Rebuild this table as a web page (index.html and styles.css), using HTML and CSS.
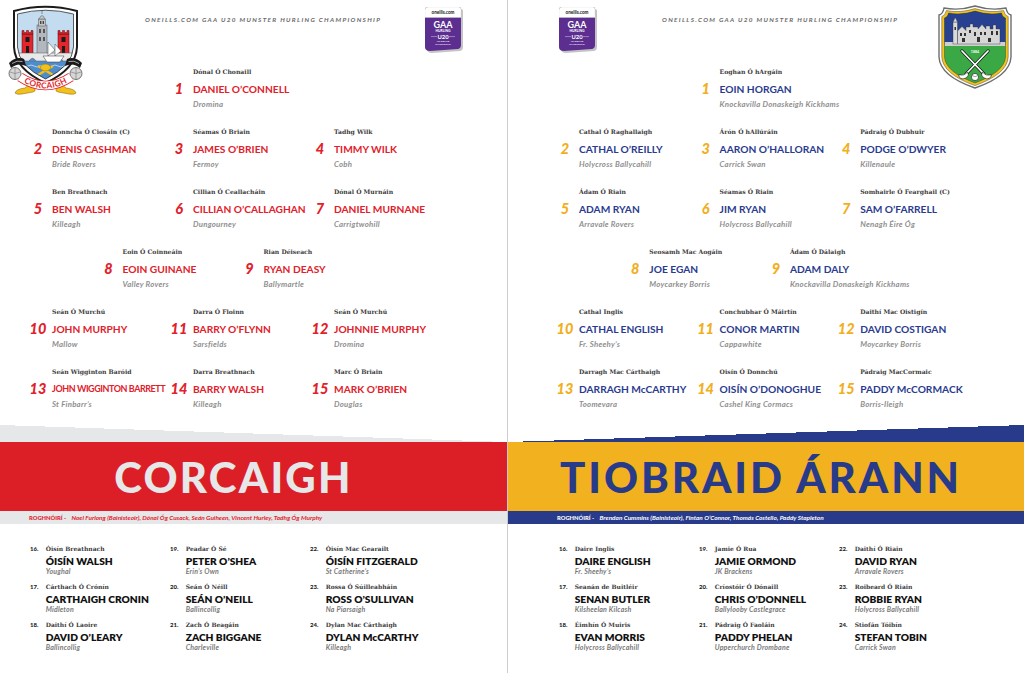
FILE: index.html
```html
<!DOCTYPE html>
<html lang="ga">
<head>
<meta charset="utf-8">
<title>Corcaigh v Tiobraid Árann – U20 Munster Hurling</title>
<link rel="stylesheet" href="styles.css">
</head>
<body>
<div class="spread">

  <section class="page page-cork">
    <header class="page-head">
      <svg class="crest crest-cork" viewBox="0 0 75 90" role="img" aria-label="Cork GAA crest">
        <defs>
          <clipPath id="corkIn"><path d="M9.5 9 Q37.5 1.5 65.5 9 L65.5 42 Q64.5 61 37.5 74 Q10.5 61 9.5 42 Z"/></clipPath>
          <path id="corkArc" d="M12 72 Q37.5 89 63 72"/>
        </defs>
        <path d="M33 70 L17 83 Q8 84 7 88 Q9 90 14 89 L25 87 Q28 86 27 84 L37 74 Z" fill="#f2c11c" stroke="#7a5d00" stroke-width=".5"/>
        <path d="M42 70 L58 83 Q67 84 68 88 Q66 90 61 89 L50 87 Q47 86 48 84 L38 74 Z" fill="#f2c11c" stroke="#7a5d00" stroke-width=".5"/>
        <path d="M6 6 Q37.5 -2.5 69 6 L69 42 Q68 64 37.5 78 Q7 64 6 42 Z" fill="#fff" stroke="#1b1b1b" stroke-width="2"/>
        <g clip-path="url(#corkIn)">
          <rect x="0" y="0" width="75" height="80" fill="#c4dcf0"/>
          <rect x="0" y="55" width="75" height="25" fill="#4f8ccc"/>
          <path d="M8 61 q3 -2 6 0 t6 0 t6 0 t6 0 t6 0 t6 0 t6 0 t6 0 t6 0 t6 0" fill="none" stroke="#fff" stroke-width=".6"/>
          <rect x="29" y="20" width="10" height="30" fill="#b3b8be" stroke="#555" stroke-width=".5"/>
          <rect x="30.5" y="14" width="7" height="7" fill="#c2c6cb" stroke="#555" stroke-width=".5"/>
          <path d="M31 14 Q34 7 37 14 Z" fill="#c2c6cb" stroke="#555" stroke-width=".5"/>
          <line x1="34" y1="5.5" x2="34" y2="9" stroke="#555" stroke-width=".6"/>
          <rect x="32" y="16" width="1.4" height="3" fill="#444"/>
          <rect x="34.6" y="16" width="1.4" height="3" fill="#444"/>
          <rect x="31" y="24" width="2" height="4" fill="#555"/>
          <rect x="35" y="24" width="2" height="4" fill="#555"/>
          <rect x="31" y="32" width="2" height="4" fill="#555"/>
          <rect x="35" y="32" width="2" height="4" fill="#555"/>
          <rect x="14" y="29" width="11" height="22" fill="#e2262c" stroke="#5a0a0a" stroke-width=".5"/>
          <path d="M14 29 v-3.5 h2 v2 h2.5 v-2 h2 v2 h2.5 v-2 h2 v3.5 Z" fill="#e2262c" stroke="#5a0a0a" stroke-width=".5"/>
          <rect x="17.5" y="32" width="4" height="5" fill="#1b1b1b"/>
          <rect x="18" y="41" width="3" height="7" fill="#1b1b1b"/>
          <rect x="50" y="29" width="11" height="22" fill="#e2262c" stroke="#5a0a0a" stroke-width=".5"/>
          <path d="M50 29 v-3.5 h2 v2 h2.5 v-2 h2 v2 h2.5 v-2 h2 v3.5 Z" fill="#e2262c" stroke="#5a0a0a" stroke-width=".5"/>
          <rect x="53.5" y="32" width="4" height="5" fill="#1b1b1b"/>
          <rect x="54" y="41" width="3" height="7" fill="#1b1b1b"/>
          <rect x="6" y="48" width="63" height="8" fill="#e9e9e9" stroke="#555" stroke-width=".5"/>
          <path d="M10 56 Q13.5 50.5 17 56 M21 56 Q24.5 50.5 28 56 M48 56 Q51.5 50.5 55 56 M59 56 Q62.5 50.5 66 56" fill="#4f8ccc" stroke="#555" stroke-width=".5"/>
          <path d="M40 51 V37 L47 45 Z M47 51 V39 L53 46 Z" fill="#fff" stroke="#333" stroke-width=".45"/>
          <path d="M35 51 L56 51 L52 57 L39 57 Z" fill="#fff" stroke="#333" stroke-width=".5"/>
          <path d="M30 61 L45 70 M45 61 L30 70" stroke="#f2c11c" stroke-width="2.4"/>
          <ellipse cx="37.5" cy="62.5" rx="5" ry="3.4" fill="#f2c11c" stroke="#7a5d00" stroke-width=".4"/>
        </g>
        <path d="M9.5 9 Q37.5 1.5 65.5 9 L65.5 42 Q64.5 61 37.5 74 Q10.5 61 9.5 42 Z" fill="none" stroke="#1b1b1b" stroke-width=".7"/>
        <path d="M1 58 Q8 51 16 54 L18 61 Q10 57 3 63 Z" fill="#1b1b1b"/>
        <path d="M74 58 Q67 51 59 54 L57 61 Q65 57 72 63 Z" fill="#1b1b1b"/>
        <path d="M4 58.5 Q9 55 14.5 56.5" fill="none" stroke="#fff" stroke-width=".6"/>
        <path d="M71 58.5 Q66 55 60.5 56.5" fill="none" stroke="#fff" stroke-width=".6"/>
        <circle cx="7" cy="68.5" r="6" fill="#d6d6d6" stroke="#444" stroke-width=".7"/>
        <path d="M2 67 Q7 70 12 67 M7 62.5 V74.5" fill="none" stroke="#666" stroke-width=".5"/>
        <circle cx="68" cy="68.5" r="6" fill="#d6d6d6" stroke="#444" stroke-width=".7"/>
        <path d="M63 67 Q68 70 73 67 M68 62.5 V74.5" fill="none" stroke="#666" stroke-width=".5"/>
        <path d="M12 72 Q37.5 89 63 72" fill="none" stroke="#e2262c" stroke-width="9.5"/>
        <path d="M12 72 Q37.5 89 63 72" fill="none" stroke="#fff" stroke-width="8"/>
        <text class="crest-text" font-size="8.2" fill="#e2262c" dy="2.8"><textPath href="#corkArc" startOffset="50%" text-anchor="middle">CORCAIGH</textPath></text>
      </svg>
      <div class="comp-title">ONEILLS.COM GAA U20 MUNSTER HURLING CHAMPIONSHIP</div>
      <svg class="gaa-logo" viewBox="0 0 38 46" role="img" aria-label="O'Neills GAA Hurling U20 All-Ireland Championship">
        <path d="M4.5 2 H36 Q38 2 38 4 V40 Q38 43 35 44 L7 46 Q2 46 2 42 V5 Q2 2 4.5 2Z" fill="#c4c4c4"/>
        <path d="M3 0 H34 Q36 0 36 2 V38 Q36 41 33 42 L5 44 Q0 44 0 40 V3 Q0 0 3 0Z" fill="#5b2e8f"/>
        <path d="M3 0 H34 Q36 0 36 2 V10.5 H0 V3 Q0 0 3 0Z" fill="#fff" stroke="#cfcfcf" stroke-width=".4"/>
        <text class="logo-text" x="18" y="7.4" font-size="4.6" fill="#111" text-anchor="middle">oneills.com</text>
        <text class="logo-text" x="18" y="20.5" font-size="9" fill="#fff" text-anchor="middle">GAA</text>
        <text class="logo-text" x="18" y="25.4" font-size="3.4" fill="#fff" text-anchor="middle">HURLING</text>
        <text class="logo-text" x="18" y="31.6" font-size="5.8" fill="#fff" text-anchor="middle">U20</text>
        <path d="M6 29.6 H12 M24 29.6 H30" stroke="#fff" stroke-width=".4"/>
        <text class="logo-text" x="18" y="35.2" font-size="2" fill="#fff" text-anchor="middle">ALL-IRELAND</text>
        <text class="logo-text" x="18" y="37.6" font-size="2" fill="#fff" text-anchor="middle">CHAMPIONSHIP</text>
      </svg>
    </header>

    <div class="lineup">
      <div class="slot c2"><span class="num">1</span><span class="irish">Dónal Ó Chonaill</span><span class="name">DANIEL O’CONNELL</span><span class="club">Dromina</span></div>
      <div class="slot c1"><span class="num">2</span><span class="irish">Donncha Ó Ciosáin (C)</span><span class="name">DENIS CASHMAN</span><span class="club">Bride Rovers</span></div>
      <div class="slot c2"><span class="num">3</span><span class="irish">Séamas Ó Briain</span><span class="name">JAMES O’BRIEN</span><span class="club">Fermoy</span></div>
      <div class="slot c3"><span class="num">4</span><span class="irish">Tadhg Wilk</span><span class="name">TIMMY WILK</span><span class="club">Cobh</span></div>
      <div class="slot c1"><span class="num">5</span><span class="irish">Ben Breathnach</span><span class="name">BEN WALSH</span><span class="club">Killeagh</span></div>
      <div class="slot c2"><span class="num">6</span><span class="irish">Cillian Ó Ceallacháin</span><span class="name">CILLIAN O’CALLAGHAN</span><span class="club">Dungourney</span></div>
      <div class="slot c3"><span class="num">7</span><span class="irish">Dónal Ó Murnáin</span><span class="name">DANIEL MURNANE</span><span class="club">Carrigtwohill</span></div>
      <div class="slot h1"><span class="num">8</span><span class="irish">Eoin Ó Coinneáin</span><span class="name">EOIN GUINANE</span><span class="club">Valley Rovers</span></div>
      <div class="slot h2"><span class="num">9</span><span class="irish">Rian Déiseach</span><span class="name">RYAN DEASY</span><span class="club">Ballymartle</span></div>
      <div class="slot c1"><span class="num">10</span><span class="irish">Seán Ó Murchú</span><span class="name">JOHN MURPHY</span><span class="club">Mallow</span></div>
      <div class="slot c2"><span class="num">11</span><span class="irish">Darra Ó Floinn</span><span class="name">BARRY O’FLYNN</span><span class="club">Sarsfields</span></div>
      <div class="slot c3"><span class="num">12</span><span class="irish">Seán Ó Murchú</span><span class="name">JOHNNIE MURPHY</span><span class="club">Dromina</span></div>
      <div class="slot c1"><span class="num">13</span><span class="irish">Seán Wigginton Baróid</span><span class="name tight">JOHN WIGGINTON BARRETT</span><span class="club">St Finbarr’s</span></div>
      <div class="slot c2"><span class="num">14</span><span class="irish">Darra Breathnach</span><span class="name">BARRY WALSH</span><span class="club">Killeagh</span></div>
      <div class="slot c3"><span class="num">15</span><span class="irish">Marc Ó Briain</span><span class="name">MARK O’BRIEN</span><span class="club">Douglas</span></div>
    </div>

    <div class="banner">
      <div class="wedge"></div>
      <div class="band"><h1 class="team">CORCAIGH</h1></div>
      <div class="selectors"><b>ROGHNÓIRÍ -</b> Noel Furlong (Bainisteoir), Dónal Óg Cusack, Seán Guiheen, Vincent Hurley, Tadhg Óg Murphy</div>
    </div>

    <div class="subs">
      <div class="sub"><span class="sub-num">16.</span><span class="irish">Óisín Breathnach</span><span class="name">ÓISÍN WALSH</span><span class="club">Youghal</span></div>
      <div class="sub"><span class="sub-num">17.</span><span class="irish">Cárthach Ó Crónín</span><span class="name">CARTHAIGH CRONIN</span><span class="club">Midleton</span></div>
      <div class="sub"><span class="sub-num">18.</span><span class="irish">Daithí Ó Laoire</span><span class="name">DAVID O’LEARY</span><span class="club">Ballincollig</span></div>
      <div class="sub"><span class="sub-num">19.</span><span class="irish">Peadar Ó Sé</span><span class="name">PETER O’SHEA</span><span class="club">Erin’s Own</span></div>
      <div class="sub"><span class="sub-num">20.</span><span class="irish">Seán Ó Néill</span><span class="name">SEÁN O’NEILL</span><span class="club">Ballincollig</span></div>
      <div class="sub"><span class="sub-num">21.</span><span class="irish">Zach Ó Beagáin</span><span class="name">ZACH BIGGANE</span><span class="club">Charleville</span></div>
      <div class="sub"><span class="sub-num">22.</span><span class="irish">Óisín Mac Gearailt</span><span class="name">ÓISÍN FITZGERALD</span><span class="club">St Catherine’s</span></div>
      <div class="sub"><span class="sub-num">23.</span><span class="irish">Rossa Ó Súilleabháin</span><span class="name">ROSS O’SULLIVAN</span><span class="club">Na Piarsaigh</span></div>
      <div class="sub"><span class="sub-num">24.</span><span class="irish">Dylan Mac Cárthaigh</span><span class="name">DYLAN McCARTHY</span><span class="club">Killeagh</span></div>
    </div>
  </section>

  <div class="divider"></div>

  <section class="page page-tipp">
    <header class="page-head">
      <svg class="gaa-logo" viewBox="0 0 38 46" role="img" aria-label="O'Neills GAA Hurling U20 All-Ireland Championship">
        <path d="M4.5 2 H36 Q38 2 38 4 V40 Q38 43 35 44 L7 46 Q2 46 2 42 V5 Q2 2 4.5 2Z" fill="#c4c4c4"/>
        <path d="M3 0 H34 Q36 0 36 2 V38 Q36 41 33 42 L5 44 Q0 44 0 40 V3 Q0 0 3 0Z" fill="#5b2e8f"/>
        <path d="M3 0 H34 Q36 0 36 2 V10.5 H0 V3 Q0 0 3 0Z" fill="#fff" stroke="#cfcfcf" stroke-width=".4"/>
        <text class="logo-text" x="18" y="7.4" font-size="4.6" fill="#111" text-anchor="middle">oneills.com</text>
        <text class="logo-text" x="18" y="20.5" font-size="9" fill="#fff" text-anchor="middle">GAA</text>
        <text class="logo-text" x="18" y="25.4" font-size="3.4" fill="#fff" text-anchor="middle">HURLING</text>
        <text class="logo-text" x="18" y="31.6" font-size="5.8" fill="#fff" text-anchor="middle">U20</text>
        <path d="M6 29.6 H12 M24 29.6 H30" stroke="#fff" stroke-width=".4"/>
        <text class="logo-text" x="18" y="35.2" font-size="2" fill="#fff" text-anchor="middle">ALL-IRELAND</text>
        <text class="logo-text" x="18" y="37.6" font-size="2" fill="#fff" text-anchor="middle">CHAMPIONSHIP</text>
      </svg>
      <div class="comp-title">ONEILLS.COM GAA U20 MUNSTER HURLING CHAMPIONSHIP</div>
      <svg class="crest crest-tipp" viewBox="0 0 76 84" role="img" aria-label="Tipperary GAA crest">
        <defs>
          <clipPath id="tippIn"><path d="M7.5 13 Q11 12 11.5 8 Q25 10.5 38 6 Q51 10.5 64.5 8 Q65 12 68.5 13 L68.5 52 Q67.5 67 38 78 Q8.5 67 7.5 52 Z"/></clipPath>
        </defs>
        <path d="M2 10 Q6 9 7 3 Q22 6 38 1 Q54 6 69 3 Q70 9 74 10 L74 52 Q73 71 38 83 Q3 71 2 52 Z" fill="#fff" stroke="#6e6e6e" stroke-width="1.4"/>
        <path d="M4.8 11.6 Q8.5 10.4 9.3 5.6 Q23.5 8.3 38 3.6 Q52.5 8.3 66.7 5.6 Q67.5 10.4 71.2 11.6 L71.2 52 Q70.3 69 38 80.6 Q5.7 69 4.8 52 Z" fill="#f4c11d" stroke="#444" stroke-width=".5"/>
        <g clip-path="url(#tippIn)">
          <rect width="76" height="84" fill="#3aa845"/>
          <rect width="76" height="40" fill="#27408f"/>
          <rect x="0" y="37" width="76" height="4" fill="#cfcfcf"/>
          <rect x="16" y="17" width="4.5" height="22" fill="#dadada" stroke="#333" stroke-width=".4"/>
          <path d="M16 17 L18.25 12.5 L20.5 17 Z" fill="#dadada" stroke="#333" stroke-width=".4"/>
          <path d="M20.5 39 V26 L25 21.5 L29 25.5 V22 h4 v-3 h3 v3 h5 V24 L45 19.5 L49 24 V21 h4 v3 h3 v-4 h3 v4 h4 V39 Z" fill="#d6d6d6" stroke="#333" stroke-width=".4"/>
          <g fill="#333">
            <rect x="23" y="28" width="2" height="3"/><rect x="27" y="28" width="2" height="3"/>
            <rect x="32" y="25" width="2" height="3"/><rect x="37" y="27" width="2" height="4"/>
            <rect x="43" y="27" width="2" height="3"/><rect x="47" y="27" width="2" height="3"/>
            <rect x="54" y="26" width="2" height="4"/><rect x="59" y="26" width="2" height="4"/>
            <rect x="25" y="33" width="3" height="4"/><rect x="40" y="32" width="3" height="5"/>
            <rect x="51" y="33" width="3" height="4"/><rect x="17.5" y="22" width="1.5" height="3"/>
          </g>
        </g>
        <path d="M7.5 13 Q11 12 11.5 8 Q25 10.5 38 6 Q51 10.5 64.5 8 Q65 12 68.5 13 L68.5 52 Q67.5 67 38 78 Q8.5 67 7.5 52 Z" fill="none" stroke="#333" stroke-width=".4"/>
        <g stroke-linecap="round" fill="none">
          <path d="M25 46 L47 69" stroke="#111" stroke-width="3.2"/>
          <path d="M51 46 L29 69" stroke="#111" stroke-width="3.2"/>
          <path d="M25 46 L47 69" stroke="#fff" stroke-width="1.8"/>
          <path d="M51 46 L29 69" stroke="#fff" stroke-width="1.8"/>
        </g>
        <path d="M45.5 67 Q49 71.5 54 69.5 Q55 73 50 74 Q46 73.5 44.5 70 Z" fill="#fff" stroke="#111" stroke-width=".6"/>
        <path d="M30.5 67 Q27 71.5 22 69.5 Q21 73 26 74 Q30 73.5 31.5 70 Z" fill="#fff" stroke="#111" stroke-width=".6"/>
        <circle cx="38" cy="72" r="3.6" fill="#fff" stroke="#111" stroke-width=".6"/>
        <path d="M35 70.5 Q38 73 41 70.5" fill="none" stroke="#111" stroke-width=".4"/>
        <text class="crest-text" x="38" y="47.6" font-size="3.6" fill="#fff" text-anchor="middle">1884</text>
      </svg>
    </header>

    <div class="lineup">
      <div class="slot c2"><span class="num">1</span><span class="irish">Eoghan Ó hArgáin</span><span class="name">EOIN HORGAN</span><span class="club">Knockavilla Donaskeigh Kickhams</span></div>
      <div class="slot c1"><span class="num">2</span><span class="irish">Cathal Ó Raghallaigh</span><span class="name">CATHAL O’REILLY</span><span class="club">Holycross Ballycahill</span></div>
      <div class="slot c2"><span class="num">3</span><span class="irish">Árón Ó hAllúráin</span><span class="name">AARON O’HALLORAN</span><span class="club">Carrick Swan</span></div>
      <div class="slot c3"><span class="num">4</span><span class="irish">Pádraig Ó Dubhuir</span><span class="name">PODGE O’DWYER</span><span class="club">Killenaule</span></div>
      <div class="slot c1"><span class="num">5</span><span class="irish">Ádam Ó Riain</span><span class="name">ADAM RYAN</span><span class="club">Arravale Rovers</span></div>
      <div class="slot c2"><span class="num">6</span><span class="irish">Séamas Ó Riain</span><span class="name">JIM RYAN</span><span class="club">Holycross Ballycahill</span></div>
      <div class="slot c3"><span class="num">7</span><span class="irish">Somhairle Ó Fearghail (C)</span><span class="name">SAM O’FARRELL</span><span class="club">Nenagh Éire Óg</span></div>
      <div class="slot h1"><span class="num">8</span><span class="irish">Seosamh Mac Aogáin</span><span class="name">JOE EGAN</span><span class="club">Moycarkey Borris</span></div>
      <div class="slot h2"><span class="num">9</span><span class="irish">Ádam Ó Dálaigh</span><span class="name">ADAM DALY</span><span class="club">Knockavilla Donaskeigh Kickhams</span></div>
      <div class="slot c1"><span class="num">10</span><span class="irish">Cathal Inglis</span><span class="name">CATHAL ENGLISH</span><span class="club">Fr. Sheehy’s</span></div>
      <div class="slot c2"><span class="num">11</span><span class="irish">Conchubhar Ó Máirtín</span><span class="name">CONOR MARTIN</span><span class="club">Cappawhite</span></div>
      <div class="slot c3"><span class="num">12</span><span class="irish">Daithí Mac Oistigín</span><span class="name">DAVID COSTIGAN</span><span class="club">Moycarkey Borris</span></div>
      <div class="slot c1"><span class="num">13</span><span class="irish">Darragh Mac Cárthaigh</span><span class="name">DARRAGH McCARTHY</span><span class="club">Toomevara</span></div>
      <div class="slot c2"><span class="num">14</span><span class="irish">Oisín Ó Donnchú</span><span class="name">OISÍN O’DONOGHUE</span><span class="club">Cashel King Cormacs</span></div>
      <div class="slot c3"><span class="num">15</span><span class="irish">Pádraig MacCormaic</span><span class="name">PADDY McCORMACK</span><span class="club">Borris-Ileigh</span></div>
    </div>

    <div class="banner">
      <div class="wedge"></div>
      <div class="band"><h1 class="team">TIOBRAID ÁRANN</h1></div>
      <div class="selectors"><b>ROGHNÓIRÍ -</b> Brendan Cummins (Bainisteoir), Fintan O’Connor, Thomás Costello, Paddy Stapleton</div>
    </div>

    <div class="subs">
      <div class="sub"><span class="sub-num">16.</span><span class="irish">Daire Inglis</span><span class="name">DAIRE ENGLISH</span><span class="club">Fr. Sheehy’s</span></div>
      <div class="sub"><span class="sub-num">17.</span><span class="irish">Seanán de Buitléir</span><span class="name">SENAN BUTLER</span><span class="club">Kilsheelan Kilcash</span></div>
      <div class="sub"><span class="sub-num">18.</span><span class="irish">Éimhín Ó Muiris</span><span class="name">EVAN MORRIS</span><span class="club">Holycross Ballycahill</span></div>
      <div class="sub"><span class="sub-num">19.</span><span class="irish">Jamie Ó Rua</span><span class="name">JAMIE ORMOND</span><span class="club">JK Brackens</span></div>
      <div class="sub"><span class="sub-num">20.</span><span class="irish">Críostóir Ó Dónaill</span><span class="name">CHRIS O’DONNELL</span><span class="club">Ballylooby Castlegrace</span></div>
      <div class="sub"><span class="sub-num">21.</span><span class="irish">Pádraig Ó Faoláin</span><span class="name">PADDY PHELAN</span><span class="club">Upperchurch Drombane</span></div>
      <div class="sub"><span class="sub-num">22.</span><span class="irish">Daithí Ó Riain</span><span class="name">DAVID RYAN</span><span class="club">Arravale Rovers</span></div>
      <div class="sub"><span class="sub-num">23.</span><span class="irish">Roibeard Ó Riain</span><span class="name">ROBBIE RYAN</span><span class="club">Holycross Ballycahill</span></div>
      <div class="sub"><span class="sub-num">24.</span><span class="irish">Stiofán Tóibín</span><span class="name">STEFAN TOBIN</span><span class="club">Carrick Swan</span></div>
    </div>
  </section>

</div>
</body>
</html>
```

FILE: styles.css
```css
* { box-sizing: border-box; margin: 0; padding: 0; }

html, body { background: #fff; }

body {
  width: 1024px;
  height: 673px;
  overflow: hidden;
  font-family: Lato, "Open Sans", sans-serif;
}

.spread {
  display: flex;
  height: 673px;
}

.page {
  display: flex;
  flex-direction: column;
}

.page-cork { width: 507px; }
.page-tipp { flex: 1; }

.divider {
  width: 1px;
  background: #cdcdcd;
}

/* ---------- header ---------- */
.page-head {
  display: flex;
  align-items: flex-start;
  height: 67px;
}

.crest { display: block; flex: none; }
.crest-cork { width: 75px; height: 90px; margin: 5px 0 0 8px; }
.crest-tipp { width: 76px; height: 84px; margin: 5px 11px 0 auto; }
.crest-text, .logo-text { font-family: Lato, sans-serif; font-weight: 700; }

.comp-title {
  font: italic 700 6.4px/8px Lato, sans-serif;
  letter-spacing: 1.32px;
  color: #6a6a6a;
  margin-top: 16px;
  white-space: nowrap;
}
.page-cork .comp-title { margin-left: 62px; }
.page-tipp .comp-title { margin-left: 65px; }

.gaa-logo { display: block; flex: none; width: 38px; height: 46px; margin-top: 7px; }
.page-cork .gaa-logo { margin-left: auto; margin-right: 44px; }
.page-tipp .gaa-logo { margin-left: 51px; }

/* ---------- starting fifteen ---------- */
.lineup {
  display: grid;
  grid-template-columns: repeat(6, 70.5px);
  row-gap: 18px;
}
.page-cork .lineup { padding-left: 28px; }
.page-tipp .lineup { padding-left: 47px; grid-template-columns: repeat(6, 70.3px); }

.c1 { grid-column: 1 / 3; }
.c2 { grid-column: 3 / 5; }
.c3 { grid-column: 5 / 7; }
.h1 { grid-column: 2 / 4; }
.h2 { grid-column: 4 / 6; }

.slot {
  display: grid;
  grid-template-columns: 20px minmax(0, 1fr);
  column-gap: 4px;
  grid-template-areas:
    ". irish"
    "num name"
    ". club";
  white-space: nowrap;
}

.num {
  grid-area: num;
  text-align: center;
  font: italic 900 14.5px/14px Lato, sans-serif;
  margin-top: 5px;
}

.irish {
  grid-area: irish;
  font: 700 6.1px/10px "DejaVu Serif", serif;
  color: #3c3c3c;
}

.name {
  grid-area: name;
  font: 700 10.2px/14px Lato, sans-serif;
  margin-top: 5px;
}
.name.tight { font-size: 9px; letter-spacing: -0.45px; }

.club {
  grid-area: club;
  font: italic 700 7.8px/10px Lato, sans-serif;
  letter-spacing: 0.25px;
  color: #8f8f8f;
  margin-top: 3px;
}

.page-cork .num,
.page-cork .slot .name { color: #e2202a; }
.page-tipp .num { color: #f2ae1c; }
.page-tipp .slot .name { color: #2a3b8f; }

/* ---------- team banner ---------- */
.banner { margin-top: 16px; }

.wedge { height: 17px; }
.page-cork .wedge { background: linear-gradient(to top right, #e6e7e8 50%, transparent 50%); }
.page-tipp .wedge { background: linear-gradient(to top left, #283a8a 50%, transparent 50%); }

.band {
  height: 69px;
  display: flex;
  align-items: center;
  justify-content: center;
}
.team {
  font: 900 42px/1 Lato, sans-serif;
}
.page-cork .band { background: #dc1e26; }
.page-cork .team { color: #e6e7e8; margin-right: 40px; letter-spacing: 2.2px; }
.page-tipp .band { background: #f2b11e; }
.page-tipp .team { color: #283a8a; margin-right: 10px; letter-spacing: 2.9px; }

.selectors {
  height: 13px;
  font: italic 700 6.4px/13px Lato, sans-serif;
  white-space: nowrap;
}
.selectors b {
  font-style: normal;
  font-weight: 900;
  font-size: 5.8px;
  margin-right: 4px;
}
.page-cork .selectors { background: #e6e7e8; color: #e2202a; padding-left: 29px; }
.page-tipp .selectors { background: #283a8a; color: #fff; padding-left: 49px; }

/* ---------- substitutes ---------- */
.subs {
  display: grid;
  grid-template-rows: repeat(3, auto);
  grid-template-columns: repeat(3, 140px);
  grid-auto-flow: column;
  row-gap: 6.3px;
  padding-top: 20px;
}
.page-cork .subs { padding-left: 30px; }
.page-tipp .subs { padding-left: 51px; }

.sub {
  display: grid;
  grid-template-columns: 15.7px minmax(0, 1fr);
  grid-template-areas:
    "num irish"
    ". name"
    ". club";
  white-space: nowrap;
}
.sub-num {
  grid-area: num;
  font: 900 6px/9px Lato, sans-serif;
  color: #222;
}
.sub .irish { line-height: 9px; font-size: 6px; }
.sub .name {
  font: 800 10.2px/12px Lato, sans-serif;
  color: #111;
  margin-top: 1.7px;
}
.sub .club {
  font: italic 700 7px/9px Lato, sans-serif;
  letter-spacing: 0.2px;
  color: #7a7a7a;
  margin-top: 0;
}
```
